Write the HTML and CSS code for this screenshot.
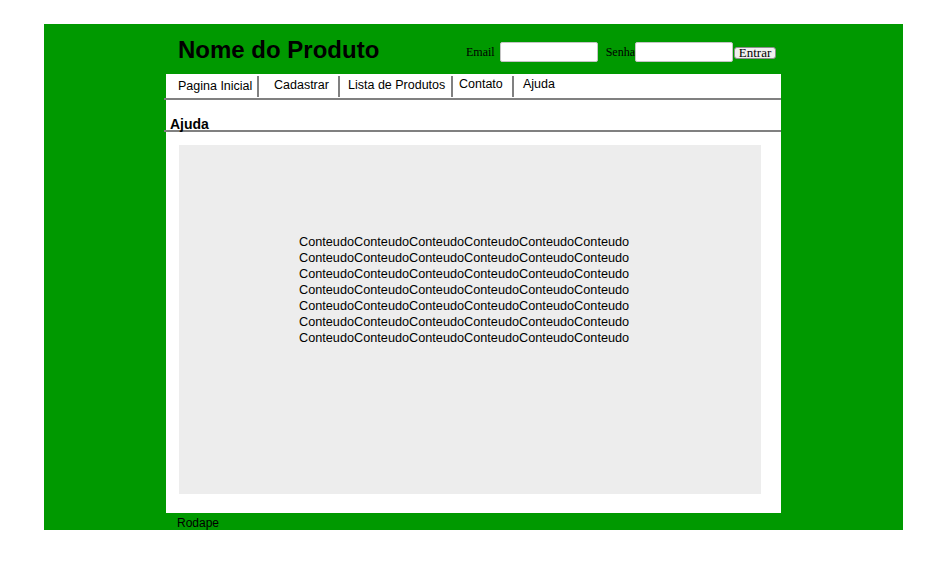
FILE: index.html
```html
<!DOCTYPE html>
<html lang="pt">
<head>
<meta charset="utf-8">
<title>Nome do Produto</title>
<link rel="stylesheet" href="styles.css">
</head>
<body>
<div class="page">
  <div class="wrap">
    <header class="header">
      <h1 class="title">Nome do Produto</h1>
      <form class="login">
        <label class="lbl lbl-email">Email</label>
        <input class="field" type="text">
        <label class="lbl lbl-senha">Senha</label>
        <input class="field" type="password">
        <button class="btn" type="button">Entrar</button>
      </form>
    </header>
    <div class="main">
      <nav class="nav">
        <a class="nav-item n1">Pagina Inicial</a>
        <a class="nav-item n2">Cadastrar</a>
        <a class="nav-item n3">Lista de Produtos</a>
        <a class="nav-item n4">Contato</a>
        <a class="nav-item n5">Ajuda</a>
      </nav>
      <div class="rule"></div>
      <h2 class="section-title">Ajuda</h2>
      <div class="rule"></div>
      <div class="content">
        <div class="content-text">
          <div>ConteudoConteudoConteudoConteudoConteudoConteudo</div>
          <div>ConteudoConteudoConteudoConteudoConteudoConteudo</div>
          <div>ConteudoConteudoConteudoConteudoConteudoConteudo</div>
          <div>ConteudoConteudoConteudoConteudoConteudoConteudo</div>
          <div>ConteudoConteudoConteudoConteudoConteudoConteudo</div>
          <div>ConteudoConteudoConteudoConteudoConteudoConteudo</div>
          <div>ConteudoConteudoConteudoConteudoConteudoConteudo</div>
        </div>
      </div>
    </div>
    <footer class="footer">Rodape</footer>
  </div>
</div>
</body>
</html>
```
FILE: styles.css
```css
html, body {
  margin: 0;
  padding: 0;
  background: #ffffff;
}

.page {
  margin: 24px 0 0 44px;
  width: 859px;
  height: 506px;
  background: #009900;
}

.wrap {
  margin-left: 122px;
  width: 615px;
}

.header {
  height: 50px;
  display: flex;
  align-items: center;
}

.title {
  margin: 2px 0 0 12px;
  font-family: "Liberation Sans", Arial, sans-serif;
  font-weight: bold;
  font-size: 24px;
  line-height: 28px;
  color: #000;
}

.login {
  margin: 6px 5px 0 auto;
  display: flex;
  align-items: center;
  font-family: "Liberation Serif", "Times New Roman", serif;
  font-size: 12px;
  color: #000;
}

.lbl {
  line-height: 15px;
}

.lbl-email {
  margin-right: 5px;
}

.lbl-senha {
  margin-left: 8px;
}

.field {
  box-sizing: border-box;
  width: 98px;
  height: 20px;
  margin: 0;
  padding: 0 2px;
  border: 1px solid #c4c4c4;
  border-radius: 2px;
  background: #fff;
}

.btn {
  box-sizing: border-box;
  margin: 1px 0 0 1px;
  height: 12px;
  width: 42px;
  padding: 0;
  border: 1px solid #8f8f8f;
  border-radius: 3px;
  background: #f0f0f0;
  font-family: "Liberation Serif", "Times New Roman", serif;
  font-size: 13px;
  line-height: 9px;
  color: #000;
}

.main {
  background: #ffffff;
}

.nav {
  height: 24px;
  display: flex;
  align-items: flex-start;
  font-family: "Liberation Sans", Arial, sans-serif;
  font-size: 12.5px;
  color: #000;
}

.nav-item {
  box-sizing: border-box;
  height: 21px;
  margin-top: 2px;
  padding-top: 3px;
  line-height: 14px;
  border-right: 2px solid #808080;
  white-space: nowrap;
}

.n1 { width: 93px; padding-left: 12px; }
.n2 { width: 81px; padding-left: 15px; padding-top: 2px; }
.n3 { width: 113px; padding-left: 8px; padding-top: 2px; }
.n4 { width: 61px; padding-left: 6px; padding-top: 1px; }
.n5 { padding-left: 9px; padding-top: 1px; border-right: none; }

.rule {
  height: 2px;
  margin-left: -2px;
  background: #808080;
}

.section-title {
  margin: 0;
  box-sizing: border-box;
  height: 30px;
  padding: 19px 0 0 4px;
  font-family: "Liberation Sans", Arial, sans-serif;
  font-weight: bold;
  font-size: 14px;
  line-height: 11px;
  color: #000;
}

.content {
  padding: 13px 20px 19px 13px;
}

.content-text {
  box-sizing: border-box;
  height: 349px;
  background: #ededed;
  padding: 89px 0 0 120px;
  font-family: "Liberation Sans", Arial, sans-serif;
  font-size: 12.7px;
  line-height: 16px;
  color: #000;
}

.footer {
  box-sizing: border-box;
  height: 17px;
  padding: 4px 0 0 11px;
  font-family: "Liberation Sans", Arial, sans-serif;
  font-size: 12px;
  line-height: 13px;
  color: #000;
}
```
